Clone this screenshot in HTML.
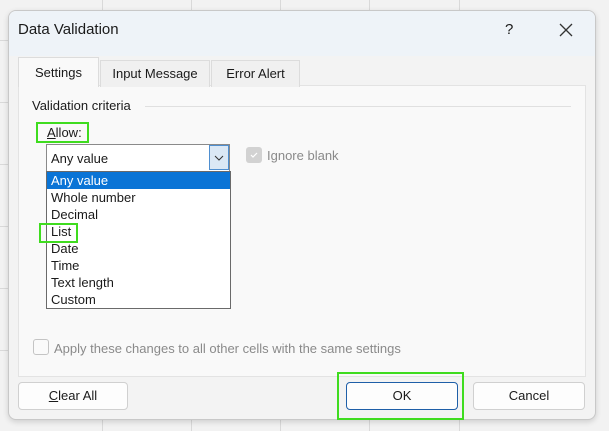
<!DOCTYPE html>
<html><head><style>
*{margin:0;padding:0;box-sizing:border-box}
body{width:609px;height:431px;position:relative;overflow:hidden;background:#f2f2f2;font-family:"Liberation Sans",sans-serif;color:#1a1a1a;font-size:13px}
.vl{position:absolute;top:0;bottom:0;width:1px;background:#d9d9d9}
.hl{position:absolute;left:0;width:8px;height:1px;background:#d9d9d9}
#d{position:absolute;left:8px;top:10px;width:588px;height:410px;background:#f3f3f3;border:1px solid #c8c8c8;border-radius:8px;box-shadow:0 2px 6px rgba(0,0,0,.15);overflow:hidden}
.title{position:absolute;left:0;top:0;width:100%;height:45px;background:#eef3f8}
.abs{position:absolute;white-space:nowrap}
.tab{position:absolute;top:49px;height:27px;border:1px solid #dcdcdc;border-bottom:none;background:#f0f0f0;text-align:center;line-height:26px;font-size:13px}
.panel{position:absolute;left:9px;top:74px;width:568px;height:292px;background:#f9f9f9;border:1px solid #e3e3e3}
.btn{position:absolute;top:371px;height:28px;background:#fdfdfd;border:1px solid #d0d0d0;border-radius:4px;text-align:center;line-height:26px;font-size:13px}
.li{position:absolute;left:4px;font-size:13px}
</style></head><body>
<div class="vl" style="left:102px"></div><div class="vl" style="left:191px"></div><div class="vl" style="left:280px"></div><div class="vl" style="left:369px"></div><div class="vl" style="left:459px"></div>
<div class="hl" style="top:40px"></div><div class="hl" style="top:102px"></div><div class="hl" style="top:164px"></div><div class="hl" style="top:226px"></div><div class="hl" style="top:288px"></div><div class="hl" style="top:350px"></div>
<div id="d">
<div class="title"></div>
<div class="abs" style="left:9px;top:10px;font-size:15px">Data Validation</div>
<div class="abs" style="left:496px;top:10px;font-size:15px">?</div>
<svg class="abs" style="left:550px;top:12px" width="14" height="14"><path d="M1 1L13 13M13 1L1 13" stroke="#333" stroke-width="1.3"/></svg>
<div class="panel"></div>
<div class="tab" style="left:9px;top:46px;width:81px;height:30px;background:#f9f9f9;line-height:30px">Settings</div>
<div class="tab" style="left:91px;width:110px">Input Message</div>
<div class="tab" style="left:202px;width:89px">Error Alert</div>
<div class="abs" style="left:23px;top:87px">Validation criteria</div>
<div class="abs" style="left:136px;top:95px;width:426px;height:1px;background:#e0e0e0"></div>
<div class="abs" style="left:27px;top:111px;width:53px;height:21px;border:2px solid #3fdc1f"></div>
<div class="abs" style="left:38px;top:114px"><u>A</u>llow:</div>
<div class="abs" style="left:37px;top:133px;width:184px;height:28px;background:#fff;border:1px solid #8a8a8a"></div>
<div class="abs" style="left:42px;top:140px">Any value</div>
<div class="abs" style="left:200px;top:134px;width:20px;height:25px;background:#dbe8f5;border:1px solid #4f8fd0"></div>
<svg class="abs" style="left:204px;top:143px" width="12" height="8"><path d="M2 2L6 6L10 2" stroke="#333" fill="none" stroke-width="1"/></svg>
<div class="abs" style="left:237px;top:136px;width:16px;height:16px;background:#d2d2d2;border-radius:3px"></div>
<svg class="abs" style="left:240px;top:139px" width="10" height="10"><path d="M2 5L4 7L8 3" stroke="#fff" fill="none" stroke-width="1.2"/></svg>
<div class="abs" style="left:258px;top:137px;color:#8a8a8a">Ignore blank</div>
<div class="abs" style="left:37px;top:160px;width:185px;height:138px;background:#fff;border:1px solid #6a6a6a">
<div class="abs" style="left:0;top:0;width:183px;height:17px;background:#0a74d6"></div>
<div class="li" style="top:1px;color:#fff">Any value</div>
<div class="li" style="top:18px">Whole number</div>
<div class="li" style="top:35px">Decimal</div>
<div class="li" style="top:52px">List</div>
<div class="li" style="top:69px">Date</div>
<div class="li" style="top:86px">Time</div>
<div class="li" style="top:103px">Text length</div>
<div class="li" style="top:120px">Custom</div>
</div>
<div class="abs" style="left:30px;top:212px;width:39px;height:20px;border:2px solid #3fdc1f"></div>
<div class="abs" style="left:24px;top:328px;width:16px;height:16px;border:1px solid #c4c4c4;border-radius:3px;background:#fafafa"></div>
<div class="abs" style="left:45px;top:330px;color:#8a8a8a">Apply these changes to all other cells with the same settings</div>
<div class="btn" style="left:9px;width:110px"><u>C</u>lear All</div>
<div class="btn" style="left:337px;width:112px;border-color:#1e5fa8">OK</div>
<div class="btn" style="left:464px;width:112px">Cancel</div>
</div>
<div class="abs" style="left:337px;top:372px;width:127px;height:48px;border:2px solid #3fdc1f"></div>
</body></html>
